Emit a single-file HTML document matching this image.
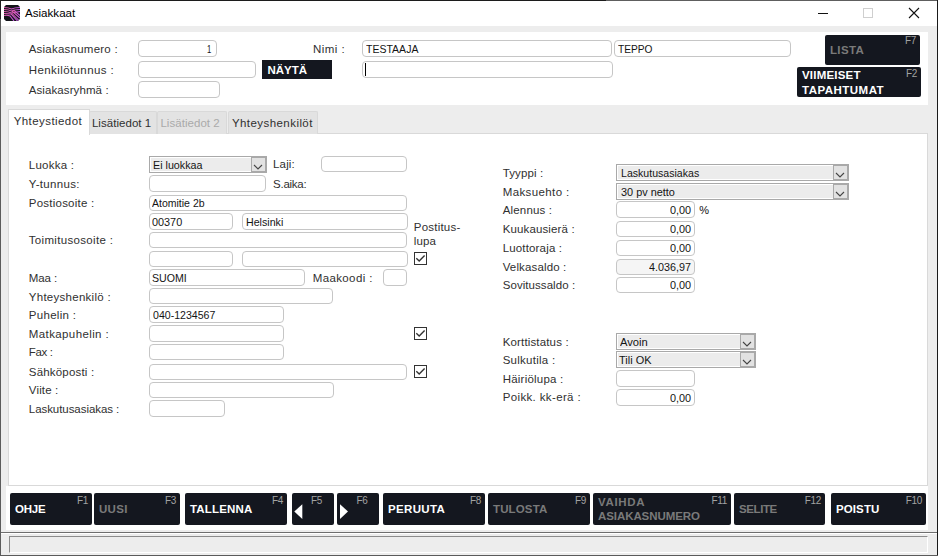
<!DOCTYPE html>
<html><head><meta charset="utf-8"><style>
html,body{margin:0;padding:0;width:938px;height:556px;overflow:hidden;background:#ededed;}
body{position:relative;font-family:"Liberation Sans", sans-serif;}
.t{position:absolute;white-space:nowrap;}
.r{position:absolute;box-sizing:border-box;}
svg.r{overflow:visible;}
</style></head><body>
<div class="r" style="left:0.00px;top:0.00px;width:938.00px;height:556.00px;background:#ededed;"></div>
<div class="r" style="left:1.00px;top:1.00px;width:936.00px;height:25.00px;background:#fff;"></div>
<div class="r" style="left:0.00px;top:0.00px;width:606.00px;height:1.00px;background:#1c1c1c;"></div>
<div class="r" style="left:606.00px;top:0.00px;width:332.00px;height:1.00px;background:#5e5e5e;"></div>
<div class="r" style="left:0.00px;top:0.00px;width:1.00px;height:19.00px;background:#1c1c1c;"></div>
<div class="r" style="left:0.00px;top:19.00px;width:1.00px;height:537.00px;background:#5c5c5c;"></div>
<div class="r" style="left:937.00px;top:0.00px;width:1.00px;height:556.00px;background:#1a1a1a;"></div>
<div class="r" style="left:0.00px;top:555.00px;width:938.00px;height:1.00px;background:#5a5a5a;"></div>
<svg class="r" style="left:4px;top:5px" width="16" height="16" viewBox="0 0 16 16">
<defs><linearGradient id="ig" x1="0" x2="1" y1="0" y2="0"><stop offset="0" stop-color="#e35aa8"/><stop offset="1" stop-color="#c459e6"/></linearGradient>
<clipPath id="ic"><path d="M2 0 H14 L16 2 V14 L14 16 H2 L0 14 V2 Z"/></clipPath></defs>
<path d="M2 0 H14 L16 2 V14 L14 16 H2 L0 14 V2 Z" fill="#14151a"/>
<g clip-path="url(#ic)" stroke="url(#ig)" stroke-width="1.05" fill="none">
<path d="M0 2.5 C3 2.5 5 2.8 7.5 4 C10 2.8 12 2.5 16 2.5"/>
<path d="M0 4.5 C3 4.5 5 4.8 7.5 6 C10 4.8 12 4.5 16 4.5"/>
<path d="M0 6.5 C3 6.5 5 6.8 7.5 8 L16 6.5"/>
<path d="M0 8.5 C3 8.5 5 8.5 7 9 L13.5 16"/>
<path d="M0 10.5 C2 10 4 10 6 11 L10 16"/>
<path d="M8 6 L16 13"/>
<path d="M9.5 5 L16 10.5"/>
<path d="M7.5 8 L15.5 16"/>
</g>
</svg>
<div class="t" style="left:25.00px;top:6.78px;font-size:11.6px;color:#000;font-weight:normal;line-height:11.6px;">Asiakkaat</div>
<div class="r" style="left:818.00px;top:13.00px;width:10.00px;height:1.00px;background:#111;"></div>
<div class="r" style="left:863.00px;top:8.00px;width:10.00px;height:10.00px;border:1px solid #cfcfcf;"></div>
<svg class="r" style="left:908px;top:7px" width="12" height="12" viewBox="0 0 12 12"><path d="M1 1 L11 11 M11 1 L1 11" stroke="#111" stroke-width="1.1"/></svg>
<div class="r" style="left:6.00px;top:32.00px;width:922.00px;height:73.00px;background:#fff;"></div>
<div class="t" style="left:28.70px;top:43.97px;font-size:11.5px;color:#303030;font-weight:normal;line-height:11.5px;letter-spacing:0.232px;">Asiakasnumero :</div>
<div class="t" style="left:28.70px;top:64.97px;font-size:11.5px;color:#303030;font-weight:normal;line-height:11.5px;letter-spacing:0.416px;">Henkilötunnus :</div>
<div class="t" style="left:28.70px;top:85.37px;font-size:11.5px;color:#303030;font-weight:normal;line-height:11.5px;letter-spacing:0.099px;">Asiakasryhmä :</div>
<div class="r" style="left:138.00px;top:40.00px;width:79.00px;height:17.00px;border:1px solid #c6c6c6;border-radius:4px;background:#fff;"></div>
<div class="t" style="left:206.60px;top:43.67px;font-size:11.5px;color:#141414;font-weight:normal;line-height:11.5px;transform:scaleX(0.6667);transform-origin:0 0;">1</div>
<div class="r" style="left:138.00px;top:61.00px;width:118.00px;height:17.00px;border:1px solid #c6c6c6;border-radius:4px;background:#fff;"></div>
<div class="r" style="left:138.00px;top:81.00px;width:82.00px;height:17.00px;border:1px solid #c6c6c6;border-radius:4px;background:#fff;"></div>
<div class="r" style="left:262.00px;top:60.00px;width:70.00px;height:19.00px;background:#14171f;"></div>
<div class="t" style="left:267.40px;top:65.27px;font-size:11.5px;color:#fff;font-weight:bold;line-height:11.5px;">NÄYTÄ</div>
<div class="t" style="left:313.10px;top:43.57px;font-size:11.5px;color:#303030;font-weight:normal;line-height:11.5px;letter-spacing:0.422px;">Nimi :</div>
<div class="r" style="left:362.00px;top:40.00px;width:250.00px;height:17.00px;border:1px solid #c6c6c6;border-radius:4px;background:#fff;"></div>
<div class="t" style="left:365.90px;top:43.67px;font-size:11.5px;color:#141414;font-weight:normal;line-height:11.5px;transform:scaleX(0.9145);transform-origin:0 0;">TESTAAJA</div>
<div class="r" style="left:614.00px;top:40.00px;width:177.00px;height:17.00px;border:1px solid #c6c6c6;border-radius:4px;background:#fff;"></div>
<div class="t" style="left:617.60px;top:43.67px;font-size:11.5px;color:#141414;font-weight:normal;line-height:11.5px;transform:scaleX(0.8838);transform-origin:0 0;">TEPPO</div>
<div class="r" style="left:362.00px;top:61.00px;width:251.00px;height:17.00px;border:1px solid #c6c6c6;border-radius:4px;background:#fff;"></div>
<div class="r" style="left:365.00px;top:63.00px;width:1.00px;height:13.00px;background:#000;"></div>
<div class="r" style="left:825.00px;top:35.00px;width:95.00px;height:30.00px;background:#14171f;border-radius:2px;"></div>
<div class="t" style="right:22.00px;top:36.33px;font-size:10px;color:#a2a2a2;font-weight:normal;line-height:10px;letter-spacing:-0.3px;">F7</div>
<div class="t" style="left:830.00px;top:44.57px;font-size:11.5px;color:#7a7a7a;font-weight:bold;line-height:11.5px;letter-spacing:0.335px;">LISTA</div>
<div class="r" style="left:797.00px;top:67.00px;width:124.00px;height:30.00px;background:#14171f;border-radius:2px;"></div>
<div class="t" style="right:21.00px;top:68.53px;font-size:10px;color:#a2a2a2;font-weight:normal;line-height:10px;letter-spacing:-0.3px;">F2</div>
<div class="t" style="left:802.00px;top:69.57px;font-size:11.5px;color:#ffffff;font-weight:bold;line-height:11.5px;letter-spacing:0.194px;">VIIMEISET</div>
<div class="t" style="left:802.00px;top:84.57px;font-size:11.5px;color:#ffffff;font-weight:bold;line-height:11.5px;letter-spacing:0.482px;">TAPAHTUMAT</div>
<div class="r" style="left:8.00px;top:133.00px;width:920.00px;height:353.00px;border:1px solid #d9d9d9;background:#fff;"></div>
<div class="r" style="left:89.00px;top:111.00px;width:68.00px;height:23.00px;background:#e3e3e3;border:1px solid #d9d9d9;border-bottom:none;border-radius:2px 2px 0 0;"></div>
<div class="r" style="left:157.00px;top:111.00px;width:70.00px;height:23.00px;background:#e3e3e3;border:1px solid #d9d9d9;border-bottom:none;border-radius:2px 2px 0 0;"></div>
<div class="r" style="left:228.00px;top:111.00px;width:90.00px;height:23.00px;background:#e3e3e3;border:1px solid #d9d9d9;border-bottom:none;border-radius:2px 2px 0 0;"></div>
<div class="r" style="left:8.00px;top:109.00px;width:82.00px;height:26.00px;background:#fff;border:1px solid #d9d9d9;border-bottom:none;"></div>
<div class="t" style="left:13.70px;top:115.97px;font-size:11.5px;color:#303030;font-weight:normal;line-height:11.5px;letter-spacing:0.430px;">Yhteystiedot</div>
<div class="t" style="left:91.90px;top:117.97px;font-size:11.5px;color:#303030;font-weight:normal;line-height:11.5px;letter-spacing:0.050px;">Lisätiedot 1</div>
<div class="t" style="left:160.40px;top:117.97px;font-size:11.5px;color:#aaaaaa;font-weight:normal;line-height:11.5px;letter-spacing:0.050px;">Lisätiedot 2</div>
<div class="t" style="left:231.90px;top:117.97px;font-size:11.5px;color:#303030;font-weight:normal;line-height:11.5px;letter-spacing:0.440px;">Yhteyshenkilöt</div>
<div class="t" style="left:28.80px;top:160.17px;font-size:11.5px;color:#303030;font-weight:normal;line-height:11.5px;letter-spacing:0.246px;">Luokka :</div>
<div class="t" style="left:28.80px;top:178.97px;font-size:11.5px;color:#303030;font-weight:normal;line-height:11.5px;letter-spacing:0.303px;">Y-tunnus:</div>
<div class="t" style="left:28.80px;top:197.97px;font-size:11.5px;color:#303030;font-weight:normal;line-height:11.5px;letter-spacing:0.229px;">Postiosoite :</div>
<div class="t" style="left:28.80px;top:234.77px;font-size:11.5px;color:#303030;font-weight:normal;line-height:11.5px;letter-spacing:0.323px;">Toimitusosoite :</div>
<div class="t" style="left:28.80px;top:273.17px;font-size:11.5px;color:#303030;font-weight:normal;line-height:11.5px;letter-spacing:-0.117px;">Maa :</div>
<div class="t" style="left:28.80px;top:291.97px;font-size:11.5px;color:#303030;font-weight:normal;line-height:11.5px;letter-spacing:0.272px;">Yhteyshenkilö :</div>
<div class="t" style="left:28.80px;top:309.97px;font-size:11.5px;color:#303030;font-weight:normal;line-height:11.5px;letter-spacing:0.293px;">Puhelin :</div>
<div class="t" style="left:28.80px;top:328.77px;font-size:11.5px;color:#303030;font-weight:normal;line-height:11.5px;letter-spacing:0.392px;">Matkapuhelin :</div>
<div class="t" style="left:28.80px;top:347.47px;font-size:11.5px;color:#303030;font-weight:normal;line-height:11.5px;letter-spacing:-0.366px;">Fax :</div>
<div class="t" style="left:28.80px;top:366.77px;font-size:11.5px;color:#303030;font-weight:normal;line-height:11.5px;letter-spacing:0.191px;">Sähköposti :</div>
<div class="t" style="left:28.80px;top:384.97px;font-size:11.5px;color:#303030;font-weight:normal;line-height:11.5px;letter-spacing:0.157px;">Viite :</div>
<div class="t" style="left:28.80px;top:403.67px;font-size:11.5px;color:#303030;font-weight:normal;line-height:11.5px;letter-spacing:-0.057px;">Laskutusasiakas :</div>
<div class="r" style="left:149.00px;top:156.00px;width:118.00px;height:17.00px;border:1px solid #a9a9a9;background:#ececec;box-shadow:inset 1px 1px 0 #fff, inset 0 -1px 0 #fff;"></div>
<div class="r" style="left:251.00px;top:157.00px;width:15.00px;height:15.00px;background:#e2e2e2;border:1px solid #a9a9a9;"></div>
<svg class="r" style="left:253.0px;top:163.1px" width="10" height="8" viewBox="0 0 10 8"><path d="M1 2 L5 6 L9 2" fill="none" stroke="#444" stroke-width="1.1"/></svg>
<div class="t" style="left:153.40px;top:159.67px;font-size:11.5px;color:#141414;font-weight:normal;line-height:11.5px;transform:scaleX(0.9317);transform-origin:0 0;">Ei luokkaa</div>
<div class="t" style="left:273.10px;top:159.47px;font-size:11.5px;color:#303030;font-weight:normal;line-height:11.5px;letter-spacing:0.125px;">Laji:</div>
<div class="r" style="left:321.00px;top:156.00px;width:86.00px;height:16.00px;border:1px solid #c6c6c6;border-radius:4px;background:#fff;"></div>
<div class="r" style="left:149.00px;top:175.00px;width:117.00px;height:17.00px;border:1px solid #c6c6c6;border-radius:4px;background:#fff;"></div>
<div class="t" style="left:273.10px;top:178.67px;font-size:11.5px;color:#303030;font-weight:normal;line-height:11.5px;letter-spacing:-0.277px;">S.aika:</div>
<div class="r" style="left:149.00px;top:195.00px;width:258.00px;height:16.00px;border:1px solid #c6c6c6;border-radius:4px;background:#fff;"></div>
<div class="t" style="left:151.80px;top:198.17px;font-size:11.5px;color:#141414;font-weight:normal;line-height:11.5px;transform:scaleX(0.9137);transform-origin:0 0;">Atomitie 2b</div>
<div class="r" style="left:149.00px;top:213.00px;width:84.00px;height:17.00px;border:1px solid #c6c6c6;border-radius:4px;background:#fff;"></div>
<div class="t" style="left:151.80px;top:216.67px;font-size:11.5px;color:#141414;font-weight:normal;line-height:11.5px;transform:scaleX(0.9435);transform-origin:0 0;">00370</div>
<div class="r" style="left:242.00px;top:213.00px;width:166.00px;height:17.00px;border:1px solid #c6c6c6;border-radius:4px;background:#fff;"></div>
<div class="t" style="left:245.50px;top:216.67px;font-size:11.5px;color:#141414;font-weight:normal;line-height:11.5px;transform:scaleX(0.9268);transform-origin:0 0;">Helsinki</div>
<div class="r" style="left:149.00px;top:232.00px;width:258.00px;height:16.00px;border:1px solid #c6c6c6;border-radius:4px;background:#fff;"></div>
<div class="r" style="left:149.00px;top:251.00px;width:84.00px;height:16.00px;border:1px solid #c6c6c6;border-radius:4px;background:#fff;"></div>
<div class="r" style="left:242.00px;top:251.00px;width:166.00px;height:16.00px;border:1px solid #c6c6c6;border-radius:4px;background:#fff;"></div>
<div class="t" style="left:413.80px;top:221.87px;font-size:11.5px;color:#303030;font-weight:normal;line-height:11.5px;letter-spacing:0.212px;">Postitus-</div>
<div class="t" style="left:413.80px;top:236.27px;font-size:11.5px;color:#303030;font-weight:normal;line-height:11.5px;letter-spacing:0.118px;">lupa</div>
<div class="r" style="left:414.00px;top:252.00px;width:13.00px;height:13.00px;border:1px solid #333;background:#fff;"></div>
<svg class="r" style="left:414px;top:252px" width="13" height="13" viewBox="0 0 13 13"><path d="M2.3 6.3 L5.2 9.0 L10.6 3.6" fill="none" stroke="#333" stroke-width="1.4"/></svg>
<div class="r" style="left:149.00px;top:269.00px;width:156.00px;height:17.00px;border:1px solid #c6c6c6;border-radius:4px;background:#fff;"></div>
<div class="t" style="left:151.80px;top:272.67px;font-size:11.5px;color:#141414;font-weight:normal;line-height:11.5px;transform:scaleX(0.9227);transform-origin:0 0;">SUOMI</div>
<div class="t" style="left:312.70px;top:272.67px;font-size:11.5px;color:#303030;font-weight:normal;line-height:11.5px;letter-spacing:0.382px;">Maakoodi :</div>
<div class="r" style="left:383.00px;top:269.00px;width:24.00px;height:17.00px;border:1px solid #c6c6c6;border-radius:4px;background:#fff;"></div>
<div class="r" style="left:149.00px;top:288.00px;width:184.00px;height:16.00px;border:1px solid #c6c6c6;border-radius:4px;background:#fff;"></div>
<div class="r" style="left:149.00px;top:306.00px;width:135.00px;height:17.00px;border:1px solid #c6c6c6;border-radius:4px;background:#fff;"></div>
<div class="t" style="left:152.90px;top:309.67px;font-size:11.5px;color:#141414;font-weight:normal;line-height:11.5px;transform:scaleX(0.9200);transform-origin:0 0;">040-1234567</div>
<div class="r" style="left:149.00px;top:325.00px;width:135.00px;height:17.00px;border:1px solid #c6c6c6;border-radius:4px;background:#fff;"></div>
<div class="r" style="left:414.00px;top:327.00px;width:13.00px;height:13.00px;border:1px solid #333;background:#fff;"></div>
<svg class="r" style="left:414px;top:327px" width="13" height="13" viewBox="0 0 13 13"><path d="M2.3 6.3 L5.2 9.0 L10.6 3.6" fill="none" stroke="#333" stroke-width="1.4"/></svg>
<div class="r" style="left:149.00px;top:344.00px;width:135.00px;height:16.00px;border:1px solid #c6c6c6;border-radius:4px;background:#fff;"></div>
<div class="r" style="left:149.00px;top:364.00px;width:258.00px;height:16.00px;border:1px solid #c6c6c6;border-radius:4px;background:#fff;"></div>
<div class="r" style="left:414.00px;top:365.00px;width:13.00px;height:13.00px;border:1px solid #333;background:#fff;"></div>
<svg class="r" style="left:414px;top:365px" width="13" height="13" viewBox="0 0 13 13"><path d="M2.3 6.3 L5.2 9.0 L10.6 3.6" fill="none" stroke="#333" stroke-width="1.4"/></svg>
<div class="r" style="left:149.00px;top:382.00px;width:185.00px;height:16.00px;border:1px solid #c6c6c6;border-radius:4px;background:#fff;"></div>
<div class="r" style="left:149.00px;top:400.00px;width:76.00px;height:17.00px;border:1px solid #c6c6c6;border-radius:4px;background:#fff;"></div>
<div class="t" style="left:502.70px;top:168.07px;font-size:11.5px;color:#303030;font-weight:normal;line-height:11.5px;letter-spacing:0.124px;">Tyyppi :</div>
<div class="t" style="left:502.70px;top:187.47px;font-size:11.5px;color:#303030;font-weight:normal;line-height:11.5px;letter-spacing:0.395px;">Maksuehto :</div>
<div class="t" style="left:502.70px;top:204.97px;font-size:11.5px;color:#303030;font-weight:normal;line-height:11.5px;letter-spacing:0.168px;">Alennus :</div>
<div class="t" style="left:502.70px;top:223.97px;font-size:11.5px;color:#303030;font-weight:normal;line-height:11.5px;letter-spacing:0.131px;">Kuukausierä :</div>
<div class="t" style="left:502.70px;top:242.77px;font-size:11.5px;color:#303030;font-weight:normal;line-height:11.5px;letter-spacing:0.160px;">Luottoraja :</div>
<div class="t" style="left:502.70px;top:261.67px;font-size:11.5px;color:#303030;font-weight:normal;line-height:11.5px;letter-spacing:0.144px;">Velkasaldo :</div>
<div class="t" style="left:502.70px;top:279.77px;font-size:11.5px;color:#303030;font-weight:normal;line-height:11.5px;letter-spacing:0.062px;">Sovitussaldo :</div>
<div class="t" style="left:502.70px;top:336.87px;font-size:11.5px;color:#303030;font-weight:normal;line-height:11.5px;letter-spacing:0.152px;">Korttistatus :</div>
<div class="t" style="left:502.70px;top:354.77px;font-size:11.5px;color:#303030;font-weight:normal;line-height:11.5px;letter-spacing:0.264px;">Sulkutila :</div>
<div class="t" style="left:502.70px;top:374.17px;font-size:11.5px;color:#303030;font-weight:normal;line-height:11.5px;letter-spacing:0.221px;">Häiriölupa :</div>
<div class="t" style="left:502.70px;top:392.07px;font-size:11.5px;color:#303030;font-weight:normal;line-height:11.5px;letter-spacing:0.360px;">Poikk. kk-erä :</div>
<div class="r" style="left:616.00px;top:164.00px;width:233.00px;height:17.00px;border:1px solid #a9a9a9;background:#ececec;box-shadow:inset 1px 1px 0 #fff, inset 0 -1px 0 #fff;"></div>
<div class="r" style="left:833.00px;top:165.00px;width:15.00px;height:15.00px;background:#e2e2e2;border:1px solid #a9a9a9;"></div>
<svg class="r" style="left:835.0px;top:171.1px" width="10" height="8" viewBox="0 0 10 8"><path d="M1 2 L5 6 L9 2" fill="none" stroke="#444" stroke-width="1.1"/></svg>
<div class="t" style="left:620.80px;top:167.67px;font-size:11.5px;color:#141414;font-weight:normal;line-height:11.5px;transform:scaleX(0.9194);transform-origin:0 0;">Laskutusasiakas</div>
<div class="r" style="left:616.00px;top:183.00px;width:233.00px;height:17.00px;border:1px solid #a9a9a9;background:#ececec;box-shadow:inset 1px 1px 0 #fff, inset 0 -1px 0 #fff;"></div>
<div class="r" style="left:833.00px;top:184.00px;width:15.00px;height:15.00px;background:#e2e2e2;border:1px solid #a9a9a9;"></div>
<svg class="r" style="left:835.0px;top:190.1px" width="10" height="8" viewBox="0 0 10 8"><path d="M1 2 L5 6 L9 2" fill="none" stroke="#444" stroke-width="1.1"/></svg>
<div class="t" style="left:620.80px;top:186.67px;font-size:11.5px;color:#141414;font-weight:normal;line-height:11.5px;transform:scaleX(0.9468);transform-origin:0 0;">30 pv netto</div>
<div class="r" style="left:616.00px;top:201.00px;width:79.00px;height:17.00px;border:1px solid #c6c6c6;border-radius:4px;background:#fff;"></div>
<div class="t" style="left:669.60px;top:204.67px;font-size:11.5px;color:#141414;font-weight:normal;line-height:11.5px;transform:scaleX(0.9460);transform-origin:0 0;">0,00</div>
<div class="t" style="left:699.20px;top:204.69px;font-size:11px;color:#111;font-weight:normal;line-height:11px;">%</div>
<div class="r" style="left:616.00px;top:221.00px;width:79.00px;height:16.00px;border:1px solid #c6c6c6;border-radius:4px;background:#fff;"></div>
<div class="t" style="left:669.60px;top:224.17px;font-size:11.5px;color:#141414;font-weight:normal;line-height:11.5px;transform:scaleX(0.9460);transform-origin:0 0;">0,00</div>
<div class="r" style="left:616.00px;top:240.00px;width:79.00px;height:16.00px;border:1px solid #c6c6c6;border-radius:4px;background:#fff;"></div>
<div class="t" style="left:669.60px;top:243.17px;font-size:11.5px;color:#141414;font-weight:normal;line-height:11.5px;transform:scaleX(0.9460);transform-origin:0 0;">0,00</div>
<div class="r" style="left:616.00px;top:259.00px;width:79.00px;height:16.00px;border:1px solid #c6c6c6;border-radius:4px;background:#f5f5f5;"></div>
<div class="t" style="left:648.80px;top:262.17px;font-size:11.5px;color:#141414;font-weight:normal;line-height:11.5px;transform:scaleX(0.9376);transform-origin:0 0;">4.036,97</div>
<div class="r" style="left:616.00px;top:277.00px;width:79.00px;height:16.00px;border:1px solid #c6c6c6;border-radius:4px;background:#fff;"></div>
<div class="t" style="left:669.60px;top:280.17px;font-size:11.5px;color:#141414;font-weight:normal;line-height:11.5px;transform:scaleX(0.9460);transform-origin:0 0;">0,00</div>
<div class="r" style="left:616.00px;top:333.00px;width:140.00px;height:17.00px;border:1px solid #a9a9a9;background:#ececec;box-shadow:inset 1px 1px 0 #fff, inset 0 -1px 0 #fff;"></div>
<div class="r" style="left:740.00px;top:334.00px;width:15.00px;height:15.00px;background:#e2e2e2;border:1px solid #a9a9a9;"></div>
<svg class="r" style="left:742.0px;top:340.1px" width="10" height="8" viewBox="0 0 10 8"><path d="M1 2 L5 6 L9 2" fill="none" stroke="#444" stroke-width="1.1"/></svg>
<div class="t" style="left:619.80px;top:336.67px;font-size:11.5px;color:#141414;font-weight:normal;line-height:11.5px;transform:scaleX(0.9729);transform-origin:0 0;">Avoin</div>
<div class="r" style="left:616.00px;top:351.00px;width:140.00px;height:17.00px;border:1px solid #a9a9a9;background:#ececec;box-shadow:inset 1px 1px 0 #fff, inset 0 -1px 0 #fff;"></div>
<div class="r" style="left:740.00px;top:352.00px;width:15.00px;height:15.00px;background:#e2e2e2;border:1px solid #a9a9a9;"></div>
<svg class="r" style="left:742.0px;top:358.1px" width="10" height="8" viewBox="0 0 10 8"><path d="M1 2 L5 6 L9 2" fill="none" stroke="#444" stroke-width="1.1"/></svg>
<div class="t" style="left:618.50px;top:354.67px;font-size:11.5px;color:#141414;font-weight:normal;line-height:11.5px;transform:scaleX(0.9534);transform-origin:0 0;">Tili OK</div>
<div class="r" style="left:616.00px;top:370.00px;width:79.00px;height:17.00px;border:1px solid #c6c6c6;border-radius:4px;background:#fff;"></div>
<div class="r" style="left:616.00px;top:389.00px;width:79.00px;height:17.00px;border:1px solid #c6c6c6;border-radius:4px;background:#fff;"></div>
<div class="t" style="left:669.60px;top:392.67px;font-size:11.5px;color:#141414;font-weight:normal;line-height:11.5px;transform:scaleX(0.9460);transform-origin:0 0;">0,00</div>
<div class="r" style="left:6.00px;top:486.00px;width:922.00px;height:44.00px;background:#fff;"></div>
<div class="r" style="left:8.00px;top:485.00px;width:920.00px;height:1.00px;background:#d9d9d9;"></div>
<div class="r" style="left:10.00px;top:493.00px;width:82.00px;height:32.00px;background:#14171f;border-radius:2px;"></div>
<div class="t" style="right:850.00px;top:495.64px;font-size:10px;color:#a2a2a2;font-weight:normal;line-height:10px;letter-spacing:-0.3px;">F1</div>
<div class="t" style="left:15.00px;top:503.77px;font-size:11.5px;color:#ffffff;font-weight:bold;line-height:11.5px;letter-spacing:-0.215px;">OHJE</div>
<div class="r" style="left:94.00px;top:493.00px;width:86.00px;height:32.00px;background:#14171f;border-radius:2px;"></div>
<div class="t" style="right:762.00px;top:495.64px;font-size:10px;color:#a2a2a2;font-weight:normal;line-height:10px;letter-spacing:-0.3px;">F3</div>
<div class="t" style="left:99.00px;top:503.77px;font-size:11.5px;color:#7a7a7a;font-weight:bold;line-height:11.5px;letter-spacing:0.307px;">UUSI</div>
<div class="r" style="left:185.00px;top:493.00px;width:102.00px;height:32.00px;background:#14171f;border-radius:2px;"></div>
<div class="t" style="right:655.00px;top:495.64px;font-size:10px;color:#a2a2a2;font-weight:normal;line-height:10px;letter-spacing:-0.3px;">F4</div>
<div class="t" style="left:190.00px;top:503.77px;font-size:11.5px;color:#ffffff;font-weight:bold;line-height:11.5px;letter-spacing:0.171px;">TALLENNA</div>
<div class="r" style="left:292.00px;top:493.00px;width:42.00px;height:32.00px;background:#14171f;border-radius:2px;"></div>
<div class="t" style="right:616.00px;top:495.64px;font-size:10px;color:#a2a2a2;font-weight:normal;line-height:10px;letter-spacing:-0.3px;">F5</div>
<svg class="r" style="left:292px;top:493px" width="42" height="32"><path d="M2.3 18.5 L10.3 11.2 L10.3 26 Z" fill="#fff"/></svg>
<div class="r" style="left:337.00px;top:493.00px;width:42.00px;height:32.00px;background:#14171f;border-radius:2px;"></div>
<div class="t" style="right:570.50px;top:495.64px;font-size:10px;color:#a2a2a2;font-weight:normal;line-height:10px;letter-spacing:-0.3px;">F6</div>
<svg class="r" style="left:337px;top:493px" width="42" height="32"><path d="M11 18.5 L3 11.2 L3 26 Z" fill="#fff"/></svg>
<div class="r" style="left:383.00px;top:493.00px;width:102.00px;height:32.00px;background:#14171f;border-radius:2px;"></div>
<div class="t" style="right:457.00px;top:495.64px;font-size:10px;color:#a2a2a2;font-weight:normal;line-height:10px;letter-spacing:-0.3px;">F8</div>
<div class="t" style="left:388.00px;top:503.77px;font-size:11.5px;color:#ffffff;font-weight:bold;line-height:11.5px;letter-spacing:0.346px;">PERUUTA</div>
<div class="r" style="left:488.00px;top:493.00px;width:102.00px;height:32.00px;background:#14171f;border-radius:2px;"></div>
<div class="t" style="right:352.00px;top:495.64px;font-size:10px;color:#a2a2a2;font-weight:normal;line-height:10px;letter-spacing:-0.3px;">F9</div>
<div class="t" style="left:493.00px;top:503.77px;font-size:11.5px;color:#7a7a7a;font-weight:bold;line-height:11.5px;letter-spacing:0.143px;">TULOSTA</div>
<div class="r" style="left:593.00px;top:493.00px;width:138.00px;height:32.00px;background:#14171f;border-radius:2px;"></div>
<div class="t" style="right:211.00px;top:495.64px;font-size:10px;color:#a2a2a2;font-weight:normal;line-height:10px;letter-spacing:-0.3px;">F11</div>
<div class="t" style="left:598.00px;top:496.57px;font-size:11.5px;color:#7a7a7a;font-weight:bold;line-height:11.5px;letter-spacing:0.675px;">VAIHDA</div>
<div class="t" style="left:598.00px;top:511.47px;font-size:11.5px;color:#7a7a7a;font-weight:bold;line-height:11.5px;letter-spacing:-0.077px;">ASIAKASNUMERO</div>
<div class="r" style="left:734.00px;top:493.00px;width:91.00px;height:32.00px;background:#14171f;border-radius:2px;"></div>
<div class="t" style="right:117.00px;top:495.64px;font-size:10px;color:#a2a2a2;font-weight:normal;line-height:10px;letter-spacing:-0.3px;">F12</div>
<div class="t" style="left:739.00px;top:503.77px;font-size:11.5px;color:#7a7a7a;font-weight:bold;line-height:11.5px;letter-spacing:-0.397px;">SELITE</div>
<div class="r" style="left:831.00px;top:493.00px;width:95.00px;height:32.00px;background:#14171f;border-radius:2px;"></div>
<div class="t" style="right:16.00px;top:495.64px;font-size:10px;color:#a2a2a2;font-weight:normal;line-height:10px;letter-spacing:-0.3px;">F10</div>
<div class="t" style="left:836.00px;top:503.77px;font-size:11.5px;color:#ffffff;font-weight:bold;line-height:11.5px;letter-spacing:0.099px;">POISTU</div>
<div class="r" style="left:1.00px;top:532.00px;width:936.00px;height:1.00px;background:#6e6e6e;"></div>
<div class="r" style="left:1.00px;top:533.00px;width:936.00px;height:1.00px;background:#fff;"></div>
<div class="r" style="left:9.00px;top:536.00px;width:919.00px;height:17.00px;border-top:1px solid #8c8c8c;border-left:1px solid #8c8c8c;border-bottom:1px solid #fff;border-right:1px solid #fff;"></div>
</body></html>
